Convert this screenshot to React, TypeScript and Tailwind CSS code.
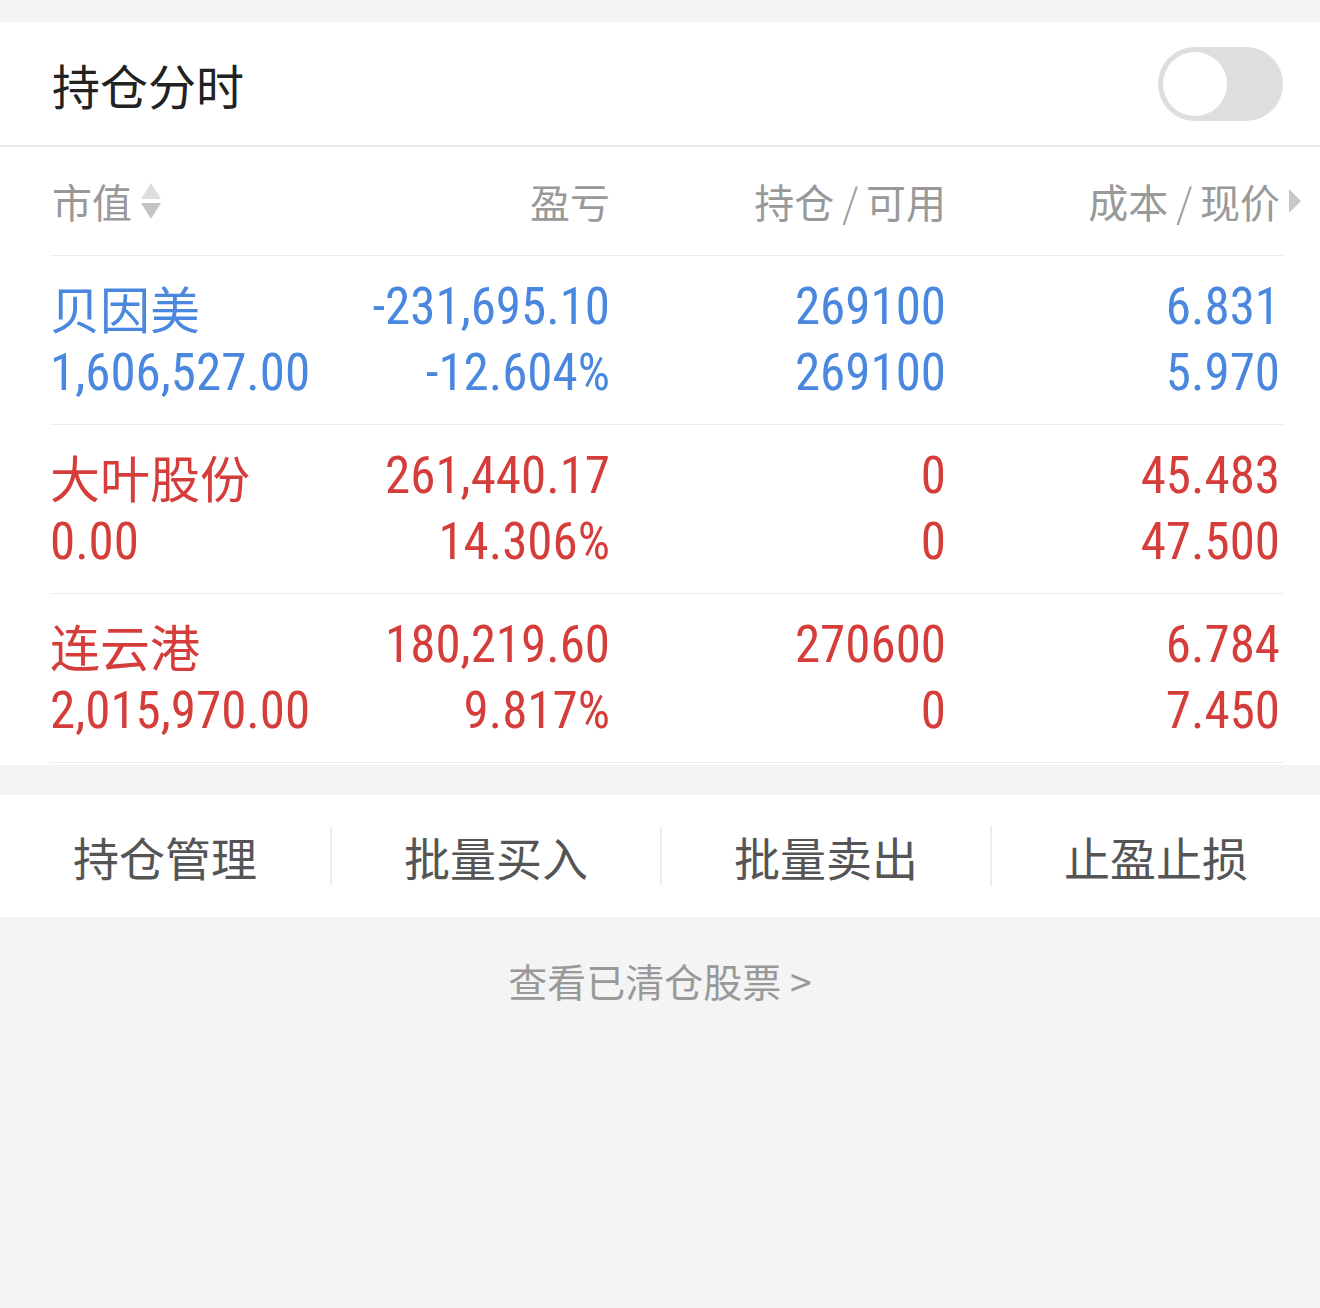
const holdings = [
  {
    name: '贝因美',
    marketValue: '1,606,527.00',
    pnl: '-231,695.10',
    pnlPct: '-12.604%',
    position: '269100',
    available: '269100',
    cost: '6.831',
    price: '5.970',
    up: false,
  },
  {
    name: '大叶股份',
    marketValue: '0.00',
    pnl: '261,440.17',
    pnlPct: '14.306%',
    position: '0',
    available: '0',
    cost: '45.483',
    price: '47.500',
    up: true,
  },
  {
    name: '连云港',
    marketValue: '2,015,970.00',
    pnl: '180,219.60',
    pnlPct: '9.817%',
    position: '270600',
    available: '0',
    cost: '6.784',
    price: '7.450',
    up: true,
  },
];

const actions = ['持仓管理', '批量买入', '批量卖出', '止盈止损'];

const cjk = "font-['Noto_Sans_CJK_SC','Noto_Sans',sans-serif]";
const num = "font-['Liberation_Sans_Narrow','Roboto_Condensed','Noto_Sans_CJK_SC',sans-serif]";

function SortIcon() {
  return (
    <svg width="22" height="40" viewBox="0 0 22 40" className="ml-2">
      <path d="M11 2 L21 18 L1 18 Z" fill="#dedede" />
      <path d="M1 22 L21 22 L11 38 Z" fill="#c4c4c4" />
    </svg>
  );
}

export default function App() {
  return (
    <div className={`min-h-[1308px] w-[1320px] bg-[#f4f4f4] pt-[22px] ${cjk}`}>
      {/* Title + toggle */}
      <div className="bg-white">
        <div className="flex h-[123px] items-center justify-between pl-[52px] pr-[37px]">
          <span className="text-[48px] leading-none text-[#222]">持仓分时</span>
          <div className="flex h-[74px] w-[125px] items-center rounded-full bg-[#dedede] p-[5px]">
            <div className="h-[64px] w-[64px] rounded-full bg-white" />
          </div>
        </div>
        <div className="h-[2px] bg-[#ebebeb]" />

        {/* Table */}
        <div className="ml-[50px] mr-[37px]">
          <div className="flex h-[109px] items-center border-b border-[#ececec] text-[40px] leading-none text-[#999]">
            <div className="flex w-[310px] items-center pl-[2px]">
              <span>市值</span>
              <SortIcon />
            </div>
            <div className="w-[250px] text-right">盈亏</div>
            <div className="w-[336px] text-right">
              持仓<span className="mx-[8px] font-light">/</span>可用
            </div>
            <div className="relative flex-1 pr-[3px] text-right">
              成本<span className="mx-[8px] font-light">/</span>现价
              <svg width="12" height="24" viewBox="0 0 12 24" className="absolute top-1/2 left-full ml-[6px] -translate-y-1/2">
                <path d="M0 0 L12 12 L0 24 Z" fill="#c8c8c8" />
              </svg>
            </div>
          </div>

          {holdings.map((h) => (
            <div
              key={h.name}
              className={`flex border-b border-[#ececec] py-[18px] leading-[66px] ${h.up ? 'text-[#d43d3a]' : 'text-[#4a87df]'}`}
            >
              <div className="w-[310px]">
                <div className="text-[50px]">{h.name}</div>
                <div className={`${num} text-[51px]`}>{h.marketValue}</div>
              </div>
              <div className={`w-[250px] text-right ${num} text-[51px]`}>
                <div>{h.pnl}</div>
                <div>{h.pnlPct}</div>
              </div>
              <div className={`w-[336px] text-right ${num} text-[51px]`}>
                <div>{h.position}</div>
                <div>{h.available}</div>
              </div>
              <div className={`flex-1 pr-[3px] text-right ${num} text-[51px]`}>
                <div>{h.cost}</div>
                <div>{h.price}</div>
              </div>
            </div>
          ))}
        </div>
        <div className="h-[2px]" />
      </div>

      {/* Action bar */}
      <div className="mt-[30px] grid h-[122px] grid-cols-4 items-center bg-white">
        {actions.map((a, i) => (
          <div
            key={a}
            className={`flex h-[60px] items-center justify-center text-[46px] text-[#555] ${i > 0 ? 'border-l-2 border-[#eeeeee]' : ''}`}
          >
            {a}
          </div>
        ))}
      </div>

      {/* Cleared stocks link */}
      <div className="flex justify-center pt-[44px] text-[39px] leading-none text-[#999]">
        查看已清仓股票 &gt;
      </div>
    </div>
  );
}
